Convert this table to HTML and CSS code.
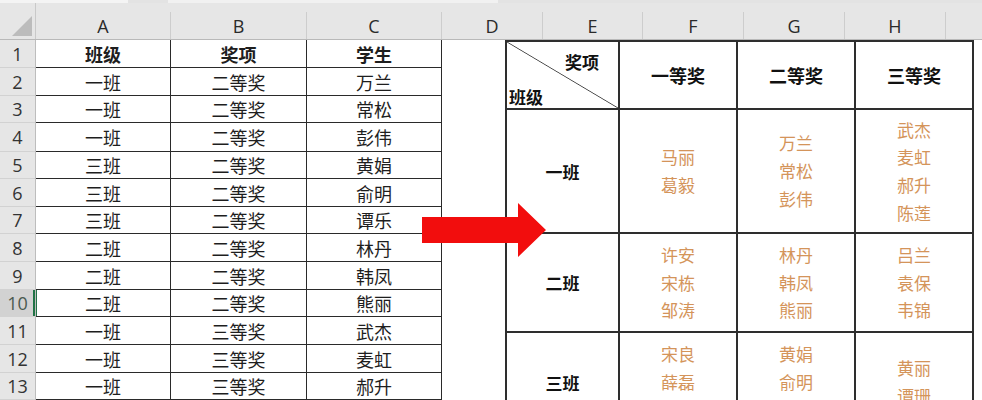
FILE: index.html
```html
<!DOCTYPE html>
<html lang="zh">
<head>
<meta charset="utf-8">
<link rel="stylesheet" href="styles.css">
</head>
<body>
<div class="sheet">
  <div class="topstrip"><span class="ts ts1"></span><span class="ts ts2"></span><span class="ts ts3"></span></div>
  <div class="colhead">
    <div class="corner"><span class="tri"></span></div>
    <div class="ch ca">A</div>
    <div class="ch cb">B</div>
    <div class="ch cc">C</div>
    <div class="ch cd">D</div>
    <div class="ch ce">E</div>
    <div class="ch cf">F</div>
    <div class="ch cg">G</div>
    <div class="ch chh">H</div>
    <div class="ch ci"></div>
  </div>
  <div class="body">
    <div class="rowheads">
      <div class="rh">1</div><div class="rh">2</div><div class="rh">3</div><div class="rh">4</div>
      <div class="rh">5</div><div class="rh">6</div><div class="rh">7</div><div class="rh">8</div>
      <div class="rh">9</div><div class="rh sel">10</div><div class="rh">11</div><div class="rh">12</div>
      <div class="rh">13</div>
    </div>
    <div class="left">
      <div class="c b">班级</div><div class="c b">奖项</div><div class="c b">学生</div>
      <div class="c">一班</div><div class="c">二等奖</div><div class="c">万兰</div>
      <div class="c">一班</div><div class="c">二等奖</div><div class="c">常松</div>
      <div class="c">一班</div><div class="c">二等奖</div><div class="c">彭伟</div>
      <div class="c">三班</div><div class="c">二等奖</div><div class="c">黄娟</div>
      <div class="c">三班</div><div class="c">二等奖</div><div class="c">俞明</div>
      <div class="c">三班</div><div class="c">二等奖</div><div class="c">谭乐</div>
      <div class="c">二班</div><div class="c">二等奖</div><div class="c">林丹</div>
      <div class="c">二班</div><div class="c">二等奖</div><div class="c">韩凤</div>
      <div class="c selcell">二班</div><div class="c">二等奖</div><div class="c">熊丽</div>
      <div class="c">一班</div><div class="c">三等奖</div><div class="c">武杰</div>
      <div class="c">一班</div><div class="c">三等奖</div><div class="c">麦虹</div>
      <div class="c">一班</div><div class="c">三等奖</div><div class="c">郝升</div>
    </div>
    <div class="spacer"></div>
    <div class="right">
      <div class="r diag"><span class="dtop">奖项</span><span class="dbot">班级</span></div>
      <div class="r hd">一等奖</div>
      <div class="r hd">二等奖</div>
      <div class="r hd">三等奖</div>
      <div class="r cls">一班</div>
      <div class="r nm">马丽<br>葛毅</div>
      <div class="r nm">万兰<br>常松<br>彭伟</div>
      <div class="r nm">武杰<br>麦虹<br>郝升<br>陈莲</div>
      <div class="r cls">二班</div>
      <div class="r nm">许安<br>宋栋<br>邹涛</div>
      <div class="r nm">林丹<br>韩凤<br>熊丽</div>
      <div class="r nm">吕兰<br>袁保<br>韦锦</div>
      <div class="r cls">三班</div>
      <div class="r nm">宋良<br>薛磊<br>谭乐</div>
      <div class="r nm">黄娟<br>俞明<br>谭乐</div>
      <div class="r nm">黄丽<br>谭珊</div>
    </div>
    <svg class="arrow" width="130" height="60" viewBox="0 0 130 60">
      <polygon points="0,14 96,14 96,0 124,27 96,54 96,40 0,40" fill="#f20d0d"/>
    </svg>
  </div>
</div>
</body>
</html>
```
FILE: styles.css
```css
html, body {
  margin: 0;
  padding: 0;
  background: #fff;
}
.sheet {
  width: 982px;
  height: 400px;
  overflow: hidden;
  font-family: "Noto Sans CJK SC", "Noto Sans", sans-serif;
  color: #1c1c1c;
}
.topstrip {
  height: 3px;
  display: flex;
  background: #e3e3e3;
}
.ts { height: 3px; }
.ts1 { width: 128px; background: #f4f4f4; }
.ts2 { width: 40px; background: #e3e3e3; }
.ts3 { width: 330px; background: #f1f1f1; }

.colhead {
  height: 37px;
  display: flex;
  background: #e6e6e6;
  border-bottom: 1px solid #b9b9b9;
  box-sizing: border-box;
}
.corner {
  width: 36px;
  flex: none;
  box-sizing: border-box;
  border-right: 1px solid #c9c9c9;
  display: flex;
  align-items: flex-end;
  justify-content: flex-end;
  padding: 0 3px 3px 0;
}
.tri {
  width: 0;
  height: 0;
  border-left: 20px solid transparent;
  border-bottom: 20px solid #bcbcbc;
}
.ch {
  flex: none;
  margin-top: 9px;
  height: 27px;
  box-sizing: border-box;
  border-right: 1px solid #cdcdcd;
  display: flex;
  align-items: center;
  justify-content: center;
  font-family: "Open Sans", "Noto Sans", sans-serif;
  font-size: 18px;
  color: #2a2a2a;
}
.ca { width: 135px; }
.cb { width: 136px; }
.cc { width: 135px; }
.cd { width: 101px; }
.ce { width: 100px; }
.cf { width: 101px; }
.cg { width: 101px; }
.chh { width: 101px; }
.ci { flex: 1; border-right: none; }

.body {
  position: relative;
  height: 360px;
  display: flex;
  align-items: flex-start;
}
.rowheads {
  width: 36px;
  flex: none;
  display: grid;
  grid-template-rows: 28px 28px 27px 29px 27px 28px 27px 28px 28px 27px 28px 28px 27px;
  background: #e6e6e6;
  box-sizing: border-box;
  border-right: 1px solid #bdbdbd;
}
.rh {
  display: flex;
  align-items: center;
  justify-content: center;
  border-bottom: 1px solid #d2d2d2;
  font-family: "Open Sans", "Noto Sans", sans-serif;
  font-size: 18px;
  color: #333;
}
.rh.sel {
  background: #d2d2d2;
  color: #4a5a50;
  box-shadow: inset -2px 0 0 #217346;
}
.left {
  flex: none;
  display: grid;
  grid-template-columns: 135px 136px 135px;
  grid-template-rows: 28px 28px 27px 29px 27px 28px 27px 28px 28px 27px 28px 28px 27px;
}
.c {
  box-sizing: border-box;
  border-right: 1px solid #2a2a2a;
  border-bottom: 1px solid #2a2a2a;
  display: flex;
  align-items: center;
  justify-content: center;
  font-size: 18px;
  color: #1e1e1e;
}
.c.b { font-weight: 700; }
.c.selcell { box-shadow: inset 1px 0 0 #217346; }
.spacer {
  width: 63px;
  flex: none;
}
.right {
  flex: none;
  display: grid;
  grid-template-columns: 111px 116px 116px 116px;
  grid-template-rows: 66px 122px 97px 98px;
  gap: 2px;
  padding: 2px;
  background: #2e2e2e;
}
.r {
  background: #fff;
  display: flex;
  align-items: center;
  justify-content: center;
  text-align: center;
}
.hd {
  font-size: 18px;
  font-weight: 700;
  color: #111;
}
.cls {
  font-size: 17px;
  font-weight: 700;
  color: #111;
}
.nm {
  font-size: 17px;
  line-height: 27.7px;
  color: #d4945a;
}
.diag {
  flex-direction: column;
  align-items: stretch;
  justify-content: flex-start;
  background: linear-gradient(to top right, #fff calc(50% - 0.8px), #444 50%, #fff calc(50% + 0.8px));
  font-size: 17px;
  font-weight: 700;
  color: #111;
  text-align: left;
}
.dtop {
  align-self: flex-end;
  padding: 8px 19px 0 0;
  line-height: 24px;
}
.dbot {
  padding: 11px 0 0 2px;
  line-height: 24px;
}
.arrow {
  position: absolute;
  left: 422px;
  top: 163px;
}
```
